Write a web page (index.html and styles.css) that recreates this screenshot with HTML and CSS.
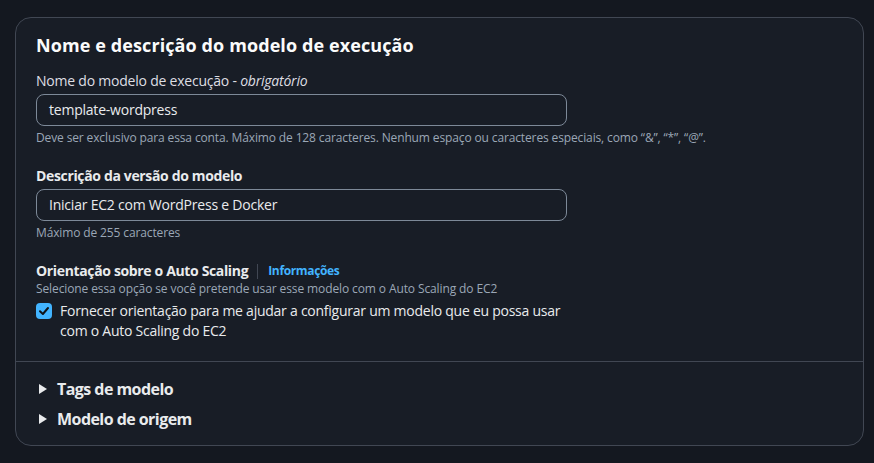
FILE: index.html
```html
<!DOCTYPE html>
<html lang="pt-BR">
<head>
<meta charset="utf-8">
<link rel="stylesheet" href="styles.css">
</head>
<body>
<section class="card">
  <div class="card-body">
    <h2 class="title">Nome e descrição do modelo de execução</h2>

    <div class="field">
      <label class="label">Nome do modelo de execução - <i>obrigatório</i></label>
      <div class="input">template-wordpress</div>
      <div class="hint">Deve ser exclusivo para essa conta. Máximo de 128 caracteres. Nenhum espaço ou caracteres especiais, como “&amp;”, “*”, “@”.</div>
    </div>

    <div class="field field-2">
      <label class="label bold">Descrição da versão do modelo</label>
      <div class="input">Iniciar EC2 com WordPress e Docker</div>
      <div class="hint">Máximo de 255 caracteres</div>
    </div>

    <div class="field field-3">
      <div class="label-row">
        <span class="label bold">Orientação sobre o Auto Scaling</span>
        <span class="sep"></span>
        <a class="info">Informações</a>
      </div>
      <div class="desc">Selecione essa opção se você pretende usar esse modelo com o Auto Scaling do EC2</div>
      <div class="check-row">
        <span class="checkbox">
          <svg width="16" height="16" viewBox="0 0 16 16"><path d="M4 8.3 L6.9 11 L12 5" fill="none" stroke="#0f141a" stroke-width="2" stroke-linecap="round" stroke-linejoin="round"/></svg>
        </span>
        <span class="check-text">Fornecer orientação para me ajudar a configurar um modelo que eu possa usar com o Auto Scaling do EC2</span>
      </div>
    </div>
  </div>

  <div class="expanders">
    <div class="expander"><span class="caret"></span>Tags de modelo</div>
    <div class="expander"><span class="caret"></span>Modelo de origem</div>
  </div>
</section>
</body>
</html>
```

FILE: styles.css
```css
html, body {
  margin: 0;
  padding: 0;
  background: #141820;
}
body {
  padding: 17px 9px 17px 15px;
  font-family: "Open Sans", "Noto Sans", sans-serif;
  color: #dedee3;
}
.card {
  width: 849px;
  height: 429px;
  box-sizing: border-box;
  background: #181d26;
  border: 1px solid #414753;
  border-radius: 16px;
  display: flex;
  flex-direction: column;
}
.card-body {
  padding: 16px 20px 20px 20px;
  border-bottom: 1px solid #414753;
}
.title {
  margin: 0;
  font-size: 18px;
  line-height: 22px;
  font-weight: 700;
  letter-spacing: 0.1px;
  color: #fbfbfb;
}
.field {
  margin-top: 14px;
}
.field-2 { margin-top: 19px; }
.field-3 { margin-top: 20px; }
.label {
  display: block;
  font-size: 14px;
  line-height: 22px;
  letter-spacing: -0.22px;
  color: #dedee3;
}
.label i { font-style: italic; }
.bold { font-weight: 700; color: #e9ebed; letter-spacing: -0.35px; }
.input {
  margin-top: 2px;
  width: 531px;
  height: 32px;
  box-sizing: border-box;
  border: 1px solid #7d8998;
  border-radius: 8px;
  padding: 0 12px;
  font-size: 14px;
  line-height: 30px;
  letter-spacing: -0.22px;
  color: #e9ebed;
}
.hint {
  margin-top: 4px;
  font-size: 12px;
  line-height: 16px;
  letter-spacing: -0.13px;
  color: #9ba7b6;
}
.label-row {
  display: flex;
  align-items: center;
  height: 20px;
}
.label-row .label { display: inline; line-height: 20px; }
.sep {
  width: 1px;
  height: 15px;
  background: #414753;
  margin: 0 10px 0 9px;
}
.info {
  font-size: 12px;
  line-height: 20px;
  font-weight: 700;
  letter-spacing: -0.35px;
  color: #42b4ff;
}
.desc {
  font-size: 12px;
  line-height: 16px;
  letter-spacing: -0.11px;
  color: #9ba7b6;
}
.check-row {
  display: flex;
  align-items: flex-start;
  margin-top: 4px;
}
.checkbox {
  flex: none;
  width: 16px;
  height: 16px;
  border-radius: 4px;
  background: #42b4ff;
  margin-top: 2px;
  margin-right: 8px;
  display: flex;
}
.check-text {
  width: 520px;
  font-size: 14px;
  line-height: 20px;
  letter-spacing: -0.25px;
  color: #e9ebed;
}
.expanders {
  padding: 12px 20px 0 23px;
}
.expander {
  display: flex;
  align-items: center;
  font-size: 16px;
  line-height: 30px;
  font-weight: 700;
  letter-spacing: -0.55px;
  color: #e9ebed;
}
.caret {
  width: 0;
  height: 0;
  border-top: 5px solid transparent;
  border-bottom: 5px solid transparent;
  border-left: 8px solid #e9ebed;
  margin-right: 10px;
}
```
